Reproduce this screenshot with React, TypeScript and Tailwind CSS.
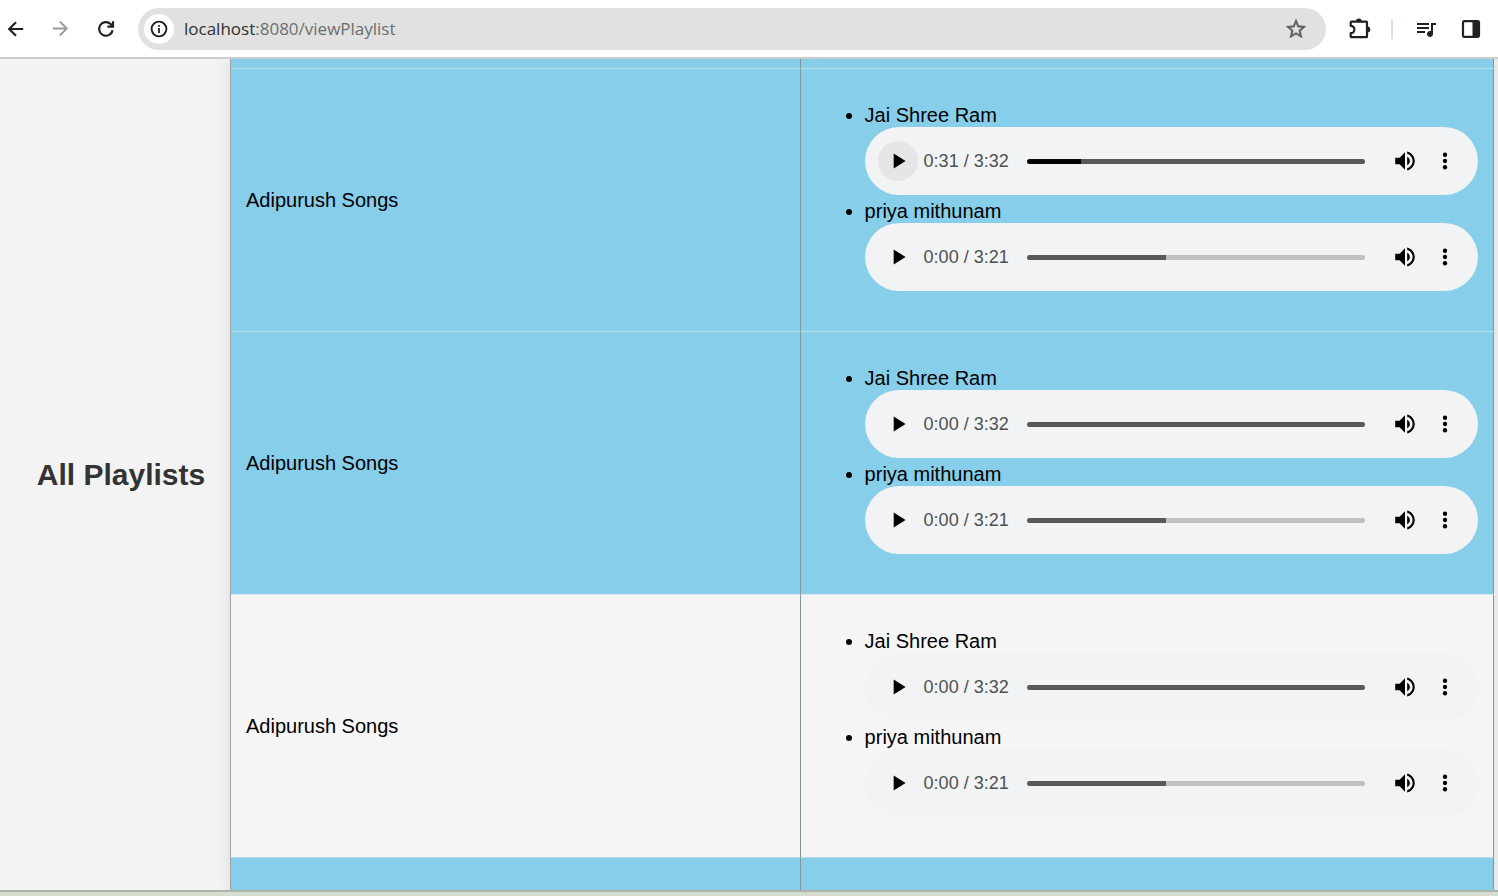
import { useState } from 'react';
import { MdArrowForward, MdQueueMusic } from 'react-icons/md';

type Track = { title: string; time: string; total: string; played: number; buffered: number; active?: boolean };
type Playlist = { name: string; shaded: boolean; tracks: Track[] };

const ram: Track = { title: 'Jai Shree Ram', time: '0:00', total: '3:32', played: 0, buffered: 100 };
const priya: Track = { title: 'priya mithunam', time: '0:00', total: '3:21', played: 0, buffered: 41 };

const playlists: Playlist[] = [
  { name: 'Adipurush Songs', shaded: true, tracks: [{ ...ram, time: '0:31', played: 16, active: true }, priya] },
  { name: 'Adipurush Songs', shaded: true, tracks: [ram, priya] },
  { name: 'Adipurush Songs', shaded: false, tracks: [ram, priya] },
];

function BackIcon() {
  return (
    <svg width="24" height="24" viewBox="0 0 24 24" fill="none" stroke="#202124" strokeWidth="2.2">
      <path d="M19.200 12H5.600M12 5.200L5.200 12L12 18.800" />
    </svg>
  );
}

function ReloadIcon() {
  return (
    <svg width="20" height="20" viewBox="0 0 20 20" fill="none" stroke="#202124" strokeWidth="2.2">
      <path d="M16.6 11.2A6.8 6.8 0 1 1 14.6 5L16.4 6.9" />
      <path d="M17 2.2V7.6H11.4" />
    </svg>
  );
}

function InfoIcon() {
  return (
    <svg width="18" height="18" viewBox="0 0 18 18" fill="none" stroke="#202124">
      <circle cx="9" cy="9" r="7.4" strokeWidth="1.9" />
      <path d="M9 8v5" strokeWidth="1.8" />
      <path d="M9 5v1.8" strokeWidth="1.8" />
    </svg>
  );
}

function StarIcon() {
  return (
    <svg width="24" height="24" viewBox="0 0 24 24">
      <path
        d="M22 9.240l-7.190-.620L12 2 9.190 8.630 2 9.240l5.460 4.730L5.820 21 12 17.270 18.180 21l-1.630-7.030L22 9.240zM12 15.400l-3.760 2.270 1-4.280-3.320-2.880 4.380-.380L12 6.100l1.710 4.040 4.380.380-3.320 2.880 1 4.280L12 15.400z"
        fill="#5b5e62"
        stroke="#5b5e62"
        strokeWidth="0.4"
      />
    </svg>
  );
}

function PuzzleIcon() {
  return (
    <svg width="24" height="24" viewBox="0 0 24 24">
      <path
        d="M4.500 4.700H19.200Q20 4.700 20 5.500V19.400Q20 20.200 19.200 20.200H4.500Q3.700 20.200 3.700 19.400V16.200A3.700 3.700 0 0 0 3.700 8.800V5.500Q3.700 4.700 4.500 4.700Z"
        fill="none"
        stroke="#202124"
        strokeWidth="2.200"
        strokeLinejoin="round"
      />
      <path d="M9 4.400a2.800 2.800 0 0 1 5.600 0zM20.300 9.500a3 3 0 0 1 0 6z" fill="#202124" />
    </svg>
  );
}

function SidePanelIcon() {
  return (
    <svg width="20" height="20" viewBox="0 0 20 20">
      <rect x="2" y="2.200" width="16" height="15.600" rx="1.200" fill="none" stroke="#202124" strokeWidth="2.200" />
      <path d="M11.500 2h6v16h-6z" fill="#202124" />
    </svg>
  );
}

function PlayIcon() {
  return (
    <svg width="26" height="26" viewBox="0 0 24 24">
      <path d="M8 5v14l11-7z" />
    </svg>
  );
}

function VolumeIcon() {
  return (
    <svg width="26" height="26" viewBox="0 0 24 24">
      <path d="M3 9v6h4l5 5V4L7 9H3zm13.500 3c0-1.770-1.020-3.290-2.500-4.030v8.050c1.480-.730 2.500-2.250 2.500-4.020zM14 3.230v2.060c2.890.860 5 3.540 5 6.710s-2.110 5.850-5 6.710v2.060c4.010-.910 7-4.490 7-8.770s-2.990-7.860-7-8.770z" />
    </svg>
  );
}

function MoreIcon() {
  return (
    <svg width="26" height="26" viewBox="0 0 24 24">
      <circle cx="12" cy="6.200" r="2" />
      <circle cx="12" cy="12" r="2" />
      <circle cx="12" cy="17.800" r="2" />
    </svg>
  );
}

function Player({ track }: { track: Track }) {
  const [pos, setPos] = useState(track.played);
  const fill = `linear-gradient(to right, #050505 ${pos}%, #595959 ${pos}%, #595959 ${track.buffered}%, #c0c0c0 ${track.buffered}%)`;
  return (
    <div className="flex h-[68px] items-center rounded-full bg-[#f1f3f4] px-[13px]">
      <button
        aria-label={`Play ${track.title}`}
        className={`flex size-10 shrink-0 items-center justify-center rounded-full ${track.active ? 'bg-[#e5e6e7]' : ''}`}
      >
        <PlayIcon />
      </button>
      <span className="ml-1.5 w-[85px] shrink-0 whitespace-nowrap text-[18px] leading-6 text-[#4f5051]">
        {track.time} / {track.total}
      </span>
      <input
        type="range"
        aria-label={`Seek ${track.title}`}
        min={0}
        max={100}
        value={pos}
        onChange={(e) => setPos(Number(e.target.value))}
        style={{ backgroundImage: fill }}
        className="mr-5 ml-[18px] h-[5px] min-w-0 flex-1 appearance-none rounded-full [&::-webkit-slider-thumb]:size-0 [&::-webkit-slider-thumb]:appearance-none"
      />
      <button aria-label="Mute" className="flex size-10 shrink-0 items-center justify-center">
        <VolumeIcon />
      </button>
      <button aria-label="More options" className="flex size-10 shrink-0 items-center justify-center">
        <MoreIcon />
      </button>
    </div>
  );
}

function BrowserBar() {
  return (
    <header className="flex h-[59px] shrink-0 items-center border-b-2 border-[#cbcdcb] bg-white pr-[17px] pl-1">
      <button aria-label="Back" className="flex w-6 justify-center">
        <BackIcon />
      </button>
      <button aria-label="Forward" className="ml-5 flex w-6 justify-center text-[#9a9a9a]">
        <MdArrowForward size={23} />
      </button>
      <button aria-label="Reload" className="ml-[22px] flex w-6 justify-center">
        <ReloadIcon />
      </button>
      <div className="ml-5 flex h-[42px] min-w-0 flex-1 items-center rounded-full bg-[#e1e1e1] pr-[18px] pl-1.5">
        <button aria-label="Site information" className="flex size-[30px] shrink-0 items-center justify-center rounded-full bg-white">
          <InfoIcon />
        </button>
        <div className="ml-2.5 min-w-0 flex-1 whitespace-nowrap font-['Open_Sans',sans-serif] text-[17px] leading-6 text-[#6b6d70]">
          <span className="text-[#303134]">localhost</span>:8080/viewPlaylist
        </div>
        <button aria-label="Bookmark">
          <StarIcon />
        </button>
      </div>
      <button aria-label="Extensions" className="ml-[21px]">
        <PuzzleIcon />
      </button>
      <div className="ml-5 h-5 w-0.5 bg-[#dfdaf5]" />
      <button aria-label="Media controls" className="ml-[21px] text-[#202124]">
        <MdQueueMusic size={24} />
      </button>
      <button aria-label="Side panel" className="ml-[23px]">
        <SidePanelIcon />
      </button>
    </header>
  );
}

export default function App() {
  const edge = 'border-r border-r-[#87949a] border-t';
  const blue = 'border-t-[#b9dcea] bg-[#87ceea]';
  const light = 'border-t-[#d9e6ec] bg-[#f5f5f5]';
  return (
    <div className="flex h-screen flex-col overflow-hidden bg-[#f3f3f3] font-['Liberation_Sans',Arial,sans-serif] text-[20px] leading-6 text-black">
      <BrowserBar />
      <main className="flex min-h-0 flex-1 overflow-hidden">
        <aside className="flex w-[230px] shrink-0 items-center justify-center pl-3">
          <h1 className="whitespace-nowrap text-[30px] leading-9 font-bold text-[#333]">All Playlists</h1>
        </aside>
        <div className="min-w-0 flex-1 border-r-4 border-[#e9e9e9] shadow-[0_0_14px_rgba(0,0,0,0.1)]">
          <table className="w-full table-fixed border-separate border-spacing-0 border-l border-[#9aa5aa]">
            <colgroup>
              <col className="w-[45.1%]" />
              <col />
            </colgroup>
            <tbody>
              <tr className="h-[9px]">
                <td className="border-r border-r-[#87949a] bg-[#87ceea]" />
                <td className="border-r border-r-[#87949a] bg-[#87ceea]" />
              </tr>
              {playlists.map((list, i) => (
                <tr key={i}>
                  <td className={`${edge} ${list.shaded ? blue : light} px-[15px] align-middle`}>{list.name}</td>
                  <td className={`${edge} ${list.shaded ? blue : light} px-[15px] pt-[30px] pb-10`}>
                    <ul className="list-disc pl-[49px]">
                      {list.tracks.map((track) => (
                        <li key={track.title} className="pt-1">
                          {track.title}
                          <Player track={track} />
                        </li>
                      ))}
                    </ul>
                  </td>
                </tr>
              ))}
              <tr className="h-12">
                <td className={`${edge} ${blue}`} />
                <td className={`${edge} ${blue}`} />
              </tr>
            </tbody>
          </table>
        </div>
      </main>
      <footer className="h-1.5 shrink-0 border-t-2 border-[#adb5ab] bg-[#d6ddd1]" />
    </div>
  );
}
